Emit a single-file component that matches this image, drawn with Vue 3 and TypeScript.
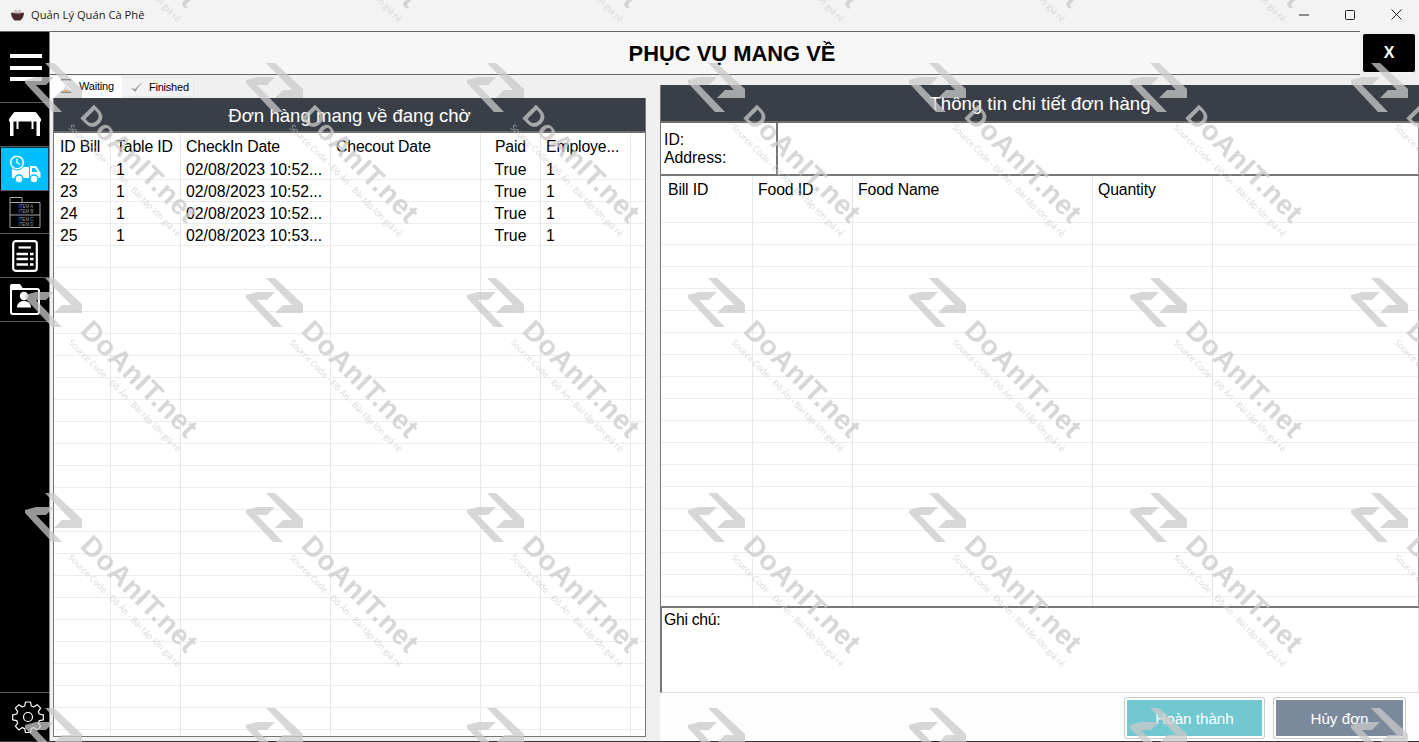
<script setup lang="ts">
interface Order { id: string; table: string; date: string; paid: string; emp: string }
const orders: Order[] = [
  { id: '22', table: '1', date: '02/08/2023 10:52...', paid: 'True', emp: '1' },
  { id: '23', table: '1', date: '02/08/2023 10:52...', paid: 'True', emp: '1' },
  { id: '24', table: '1', date: '02/08/2023 10:52...', paid: 'True', emp: '1' },
  { id: '25', table: '1', date: '02/08/2023 10:53...', paid: 'True', emp: '1' },
]
const emptyLeft = Array.from({ length: 23 }, (_, i) => i)
const emptyRight = Array.from({ length: 19 }, (_, i) => i)
</script>

<template>
  <div class="window">
    <header class="titlebar">
      <svg class="app-icon" viewBox="0 0 16 14" width="15" height="13">
        <path d="M1 4h14c0 4-2 7-4 8.500H5C3 11 1 8 1 4z" fill="#4a2a2e" />
        <path d="M2 4c2-2 10-2 12 0-3 1-9 1-12 0z" fill="#c9b8b4" />
        <path d="M5 1.500c1-.8 1 .8 2 0M9 1.500c1-.8 1 .8 2 0" stroke="#888" fill="none" />
      </svg>
      <span class="app-title">Quản Lý Quán Cà Phê</span>
      <div class="win-controls">
        <svg viewBox="0 0 10 10" width="10" height="10"><path d="M0 5h10" stroke="#222" /></svg>
        <svg viewBox="0 0 10 10" width="10" height="10"><rect x=".5" y=".5" width="9" height="9" rx="1" fill="none" stroke="#222" /></svg>
        <svg viewBox="0 0 11 11" width="11" height="11"><path d="M.5.5l10 10M10.500.5l-10 10" stroke="#222" /></svg>
      </div>
    </header>

    <div class="body">
      <nav class="sidebar">
        <div class="nav nav-menu">
          <span class="bar"></span><span class="bar"></span><span class="bar"></span>
        </div>
        <div class="nav nav-table">
          <svg viewBox="0 0 32 25" width="32" height="25">
            <path d="M6 0h20a1.500 1.500 0 0 1 1.200.6L32 7v2.500h-1V24h-3.500V9.500h-3v7.500h-2V9.500h-13v7.500h-2V9.500h-3V24H1V9.500H0V7L4.800.6A1.500 1.500 0 0 1 6 0z" fill="#fff" />
          </svg>
        </div>
        <div class="nav nav-truck">
          <svg viewBox="0 0 32 29" width="32" height="29">
            <path d="M3 12h17v11H3zM21 11h6l4.500 6.500V23H21z" fill="#fff" />
            <circle cx="8" cy="7.500" r="7.500" fill="#fff" stroke="#00bfff" stroke-width="1" />
            <circle cx="8" cy="7.500" r="5.500" fill="#00bfff" />
            <path d="M8 3.500v4.200l3 1.800" stroke="#fff" stroke-width="1.300" fill="none" />
            <path d="M23 13h3l2.500 4H23z" fill="#00bfff" />
            <circle cx="10" cy="24" r="4" fill="#fff" stroke="#00bfff" stroke-width="1.500" />
            <circle cx="25" cy="24" r="4" fill="#fff" stroke="#00bfff" stroke-width="1.500" />
          </svg>
        </div>
        <div class="nav nav-archive">
          <svg viewBox="0 0 32 31" width="32" height="31" fill="none" stroke="#a8a8a8">
            <path d="M1 30.500V.5h12V5M1 5.500h30v25H1M1 18h30" />
            <text class="item-text" x="17" y="10.500">ITEM A</text>
            <text class="item-text" x="17" y="15.500">ITEM B</text>
            <text class="item-text" x="17" y="23.500">ITEM C</text>
            <text class="item-text" x="17" y="28.500">ITEM D</text>
          </svg>
        </div>
        <div class="nav nav-doc">
          <svg viewBox="0 0 26 32" width="26" height="32" fill="none" stroke="#fff">
            <rect x="1.200" y="1.200" width="23.600" height="29.600" rx="2.500" stroke-width="2.200" />
            <path d="M6.500 7.500H19" stroke-width="2.200" />
            <path d="M4.500 14H16M4.500 19H16M4.500 24.500H16M18 14h3.500M18 19h3.500M18 24.500h3.500" stroke-width="2.400" />
          </svg>
        </div>
        <div class="nav nav-folder">
          <svg viewBox="0 0 30 31" width="30" height="31">
            <path d="M0 6V2a2 2 0 0 1 2-2h8l3 4.500H8z" fill="#fff" />
            <rect x="1" y="5" width="28" height="25" rx="2" fill="#000" stroke="#fff" stroke-width="2" />
            <circle cx="14" cy="12" r="4.200" fill="#fff" />
            <path d="M7 23.500c0-4 3-6.500 7-6.500s7 2.500 7 6.500z" fill="#fff" />
          </svg>
        </div>
        <div class="nav-spacer"></div>
        <div class="nav nav-gear">
          <svg viewBox="0 0 32 32" width="32" height="32" fill="none" stroke="#fff" stroke-width="1.200">
            <path d="M13.500 1h5l.8 4 2.400 1 3.400-2.300 3.500 3.500-2.300 3.400 1 2.400 4 .8v5l-4 .8-1 2.400 2.300 3.400-3.500 3.500-3.400-2.300-2.400 1-.8 4h-5l-.8-4-2.400-1-3.400 2.300-3.500-3.500 2.300-3.400-1-2.400-4-.8v-5l4-.8 1-2.400L3.400 7.200l3.500-3.500 3.400 2.300 2.400-1z" stroke-linejoin="round" />
            <circle cx="16" cy="16" r="4.500" />
          </svg>
        </div>
      </nav>

      <main class="content">
        <div class="top">
          <h1 class="page-title">PHỤC VỤ MANG VỀ</h1>
          <button class="close-btn">X</button>
        </div>

        <div class="columns">
          <section class="left">
            <div class="tabs">
              <div class="tab active">
                <svg class="hourglass" viewBox="0 0 12 14" width="12" height="14">
                  <path d="M1 .8h10M1 13.200h10" stroke="#8a8a8a" stroke-width="1.500" />
                  <path d="M2.500 1.500h7c0 2.500-2.500 3.500-3 5.500.5 2 3 3 3 5.500h-7c0-2.500 2.500-3.500 3-5.500-.5-2-3-3-3-5.500z" fill="#dcdcdc" />
                  <path d="M2.500 12.500c1-2 6-2 7 0z" fill="#e8a25c" />
                </svg>
                <span>Waiting</span>
              </div>
              <div class="tab">
                <svg viewBox="0 0 14 14" width="14" height="14">
                  <path d="M1 8l4 4 8-11-8 8z" fill="#9d9d9d" />
                </svg>
                <span>Finished</span>
              </div>
            </div>
            <div class="panel left-panel">
              <div class="panel-head left-head">Đơn hàng mang về đang chờ</div>
              <div class="grid">
                <div class="row head-row">
                  <div class="c c1">ID Bill</div>
                  <div class="c c2">Table ID</div>
                  <div class="c c3">CheckIn Date</div>
                  <div class="c c4">Checout Date</div>
                  <div class="c c5 mid">Paid</div>
                  <div class="c c6">Employe...</div>
                </div>
                <div v-for="o in orders" :key="o.id" class="row">
                  <div class="c c1">{{ o.id }}</div>
                  <div class="c c2">{{ o.table }}</div>
                  <div class="c c3">{{ o.date }}</div>
                  <div class="c c4"></div>
                  <div class="c c5 mid">{{ o.paid }}</div>
                  <div class="c c6">{{ o.emp }}</div>
                </div>
                <div v-for="n in emptyLeft" :key="n" class="row">
                  <div class="c c1"></div><div class="c c2"></div><div class="c c3"></div>
                  <div class="c c4"></div><div class="c c5"></div><div class="c c6"></div>
                </div>
              </div>
            </div>
          </section>

          <section class="right">
            <div class="panel-head right-head">Thông tin chi tiết đơn hàng</div>
            <div class="info">
              <div class="info-labels"><div>ID:</div><div>Address:</div></div>
              <div class="info-values"></div>
            </div>
            <div class="grid detail">
              <div class="row head-row dhead">
                <div class="d d1">Bill ID</div>
                <div class="d d2">Food ID</div>
                <div class="d d3">Food Name</div>
                <div class="d d4">Quantity</div>
              </div>
              <div v-for="n in emptyRight" :key="n" class="row">
                <div class="d d1"></div><div class="d d2"></div><div class="d d3"></div><div class="d d4"></div>
              </div>
            </div>
            <div class="note">Ghi chú:</div>
            <div class="actions">
              <button class="action done">Hoàn thành</button>
              <button class="action cancel">Hủy đơn</button>
            </div>
          </section>
        </div>
      </main>
    </div>

    <svg class="watermark" width="1419" height="742" aria-hidden="true">
      <defs>
        <pattern id="wm" x="24" y="63" width="221" height="215" patternUnits="userSpaceOnUse">
          <path d="M21 0h9l28 26v9H30l8-8h9zM12 14h18l-8 8H12l26 27H28L1 20v-3z" />
          <text class="wm-big" transform="translate(55 54) rotate(45)">DoAnIT.net</text>
          <text class="wm-small" transform="translate(44 65) rotate(45)">Source Code - Đồ Án - Bài tập lớn giá rẻ</text>
        </pattern>
      </defs>
      <rect width="1419" height="742" fill="url(#wm)" />
    </svg>
  </div>
</template>

<style>
html, body { margin: 0; padding: 0; overflow: hidden; background: #fff; }
</style>

<style scoped>
.window {
  position: relative;
  width: 1419px;
  height: 742px;
  overflow: hidden;
  display: flex;
  flex-direction: column;
  background: #f0f0f0;
  font-family: "Liberation Sans", Arial, sans-serif;
  font-size: 15.800px;
  color: #000;
}
.titlebar {
  height: 31px;
  flex: none;
  display: flex;
  align-items: center;
  background: #f3f3f3;
  padding-left: 10px;
  box-sizing: border-box;
}
.app-icon { margin-right: 6px; }
.app-title {
  font-family: "Open Sans", "Noto Sans", sans-serif;
  font-size: 11.200px;
  color: #1a1a1a;
  position: relative;
  top: -1px;
}
.win-controls {
  margin-left: auto;
  display: flex;
  align-items: center;
  gap: 36px;
  padding-right: 17px;
  position: relative;
  top: -1px;
}
.body { flex: 1; display: flex; min-height: 0; border-bottom: 1px solid #333; }
.sidebar {
  width: 49px;
  flex: none;
  background: #000;
  display: flex;
  flex-direction: column;
  box-shadow: inset 0 1px 0 #666;
}
.nav {
  display: flex;
  align-items: center;
  justify-content: center;
  border-bottom: 1px solid #5a5a5a;
  box-sizing: border-box;
  flex: none;
}
.nav-menu { height: 72px; flex-direction: column; gap: 7.500px; padding: 2px 0 0 2px; }
.bar { display: block; width: 32px; height: 4px; background: #fff; }
.nav-table { height: 44px; }
.nav-truck { height: 44px; background: #00bfff; border: 1px solid #00425a; border-left-color: #000; border-bottom-color: #5a5a5a; padding-left: 1px; }
.nav-archive { height: 43px; }
.nav-doc { height: 44px; }
.nav-folder { height: 44px; }
.nav-spacer { flex: 1; }
.nav-gear { height: 49px; border-bottom: 0; border-top: 1px solid #5a5a5a; padding-left: 7px; }
.item-text { font-family: "Liberation Sans", Arial, sans-serif; font-size: 4.500px; fill: #9a9a9a; stroke: none; text-anchor: middle; }
.content { flex: 1; display: flex; flex-direction: column; min-width: 0; border-left: 1px solid #888; background: #f0f0f0; }
.top {
  height: 44px;
  flex: none;
  display: flex;
  align-items: flex-start;
}
.page-title {
  flex: 1;
  margin: 0 2px 0 0;
  padding-left: 54px;
  text-align: center;
  font-size: 21.900px;
  font-weight: 700;
  line-height: 43px;
  background: #f7f7f7;
  border-top: 1px solid #666;
  border-bottom: 1px solid #666;
  height: 44px;
  box-sizing: border-box;
}
.close-btn {
  width: 54px;
  height: 40px;
  margin: 2px 3px 0 0;
  padding: 0;
  background: #000;
  color: #fff;
  border: 1px solid #f4f4f4;
  border-radius: 3px;
  font-family: "Liberation Sans", Arial, sans-serif;
  font-weight: 700;
  font-size: 16px;
}
.columns { flex: 1; display: flex; min-height: 0; }
.left { width: 610px; flex: none; display: flex; flex-direction: column; }
.tabs { height: 23px; flex: none; display: flex; align-items: flex-end; font-size: 11px; letter-spacing: -0.200px; }
.tab {
  display: flex;
  align-items: center;
  gap: 5px;
  height: 20px;
  padding: 0 4px 0 8px;
  background: #f3f3f3;
  border: 1px solid #e8e8e8;
  border-left: 0;
  box-sizing: border-box;
  margin-bottom: 1px;
}
.tab.active { height: 22px; background: #fff; border: 0; margin-bottom: 0; gap: 7px; padding: 0 8px 3px 10px; }
.hourglass { position: relative; z-index: 1; }
.panel { flex: 1; margin: 0 0 4px 3px; width: 593px; box-sizing: border-box; border: 1px solid #777; border-top: 0; background: #fff; display: flex; flex-direction: column; min-height: 0; overflow: hidden; }
.panel-head {
  background: #3a3f47;
  color: #fff;
  text-align: center;
  font-size: 18.600px;
  flex: none;
}
.left-head { height: 35px; line-height: 35px; border-bottom: 2px solid #6e6e6e; box-sizing: border-box; }
.right-head { height: 38px; line-height: 37px; border-bottom: 2px solid #6e6e6e; border-left: 1px solid #777; box-sizing: border-box; }
.grid { flex: 1; background: #fff; overflow: hidden; min-height: 0; }
.row { height: 22px; display: flex; box-sizing: border-box; border-bottom: 1px solid #ececec; }
.left-panel .row { line-height: 23px; }
.left-panel .row.head-row { height: 25px; border-bottom: 0; line-height: 28px; letter-spacing: -0.150px; }
.c { box-sizing: border-box; padding-left: 5px; border-right: 1px solid #e8e8e8; white-space: nowrap; overflow: hidden; flex: none; }
.c1 { width: 57px; padding-left: 6px; }
.c2 { width: 70px; }
.c3 { width: 150px; }
.c4 { width: 150px; }
.c5 { width: 60px; }
.c6 { width: 90px; }
.mid { text-align: center; padding-left: 0; }
.right { flex: 1; min-width: 0; display: flex; flex-direction: column; padding-top: 10px; }
.info { height: 53px; flex: none; display: flex; background: #fff; border-left: 1px solid #777; border-bottom: 2px solid #777; border-right: 1px solid #999; box-sizing: border-box; }
.info-labels { width: 117px; box-sizing: border-box; padding: 8px 0 0 3px; line-height: 18px; border-right: 2px solid #777; }
.info-values { flex: 1; }
.detail { flex: none; height: 432px; border-left: 1px solid #777; border-right: 1px solid #999; border-bottom: 2px solid #777; box-sizing: border-box; }
.detail .row.dhead { height: 25px; border-bottom: 0; line-height: 28px; letter-spacing: -0.150px; }
.d { box-sizing: border-box; padding-left: 5px; border-right: 1px solid #e8e8e8; flex: none; }
.d1 { width: 92px; padding-left: 7px; }
.d2 { width: 100px; }
.d3 { width: 240px; }
.d4 { width: 120px; }
.note { height: 85px; flex: none; background: #fff; border-left: 2px solid #777; border-bottom: 1px solid #ddd; border-right: 1px solid #ddd; box-sizing: border-box; padding: 2px 0 0 2px; line-height: 20px; letter-spacing: -0.300px; }
.actions { flex: 1; display: flex; justify-content: flex-end; gap: 8px; padding: 4px 13px 0 0; background: #fdfdfd; align-items: flex-start; }
.action {
  height: 42px;
  padding: 0;
  color: #fff;
  border: 1px solid #ccc;
  outline: 2px solid #fff;
  outline-offset: -3px;
  border-radius: 3px;
  font-family: "Liberation Sans", Arial, sans-serif;
  font-size: 15.200px;
}
.done { width: 141px; background: #72c8d0; }
.cancel { width: 133px; background: #7a899b; }
.watermark { position: absolute; left: 0; top: 0; pointer-events: none; fill: rgba(201, 201, 201, 0.75); }
.wm-big { font-family: "Liberation Sans", Arial, sans-serif; font-weight: 700; font-size: 28px; letter-spacing: 0.600px; }
.wm-small { font-family: "Open Sans", "Liberation Sans", sans-serif; font-size: 8.500px; }
</style>
